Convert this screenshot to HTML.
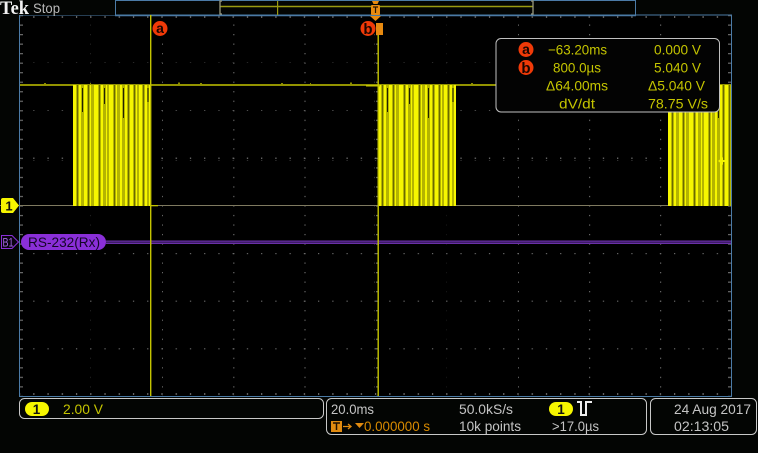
<!DOCTYPE html>
<html><head><meta charset="utf-8"><style>
html,body{margin:0;padding:0;background:#030503;width:758px;height:453px;overflow:hidden}
svg{display:block}
text{font-family:"Liberation Sans",sans-serif;font-size:14px}
.y{fill:#c4c400}.w{fill:#c4c4c4}.o{fill:#d88a00}
</style></head><body>
<svg width="758" height="453" viewBox="0 0 758 453" xmlns="http://www.w3.org/2000/svg">
<defs>
<pattern id="hd" width="14.24" height="4" patternUnits="userSpaceOnUse" x="19" y="0"><rect x="0" y="0" width="1.2" height="3" fill="#6a6a6a"/></pattern>
<pattern id="vd" width="4" height="9.52" patternUnits="userSpaceOnUse" x="0" y="15"><rect x="0" y="0" width="3" height="1.2" fill="#6a6a6a"/></pattern>
<g id="burst">
<rect x="0" y="0" width="78" height="121" fill="#b4b400"/>
<g fill="#f6f600">
<rect x="0" width="3" height="121"/><rect x="6" width="2" height="121"/><rect x="11" width="3" height="121"/><rect x="17" width="1" height="121"/><rect x="21" width="4" height="121"/><rect x="28" width="2" height="121"/><rect x="33" width="1" height="121"/><rect x="36" width="4" height="121"/><rect x="43" width="1" height="121"/><rect x="47" width="2" height="121"/><rect x="52" width="2" height="121"/><rect x="57" width="3" height="121"/><rect x="63" width="1" height="121"/><rect x="66" width="3" height="121"/><rect x="72" width="2" height="121"/><rect x="76" width="2" height="121"/>
</g>
<g fill="#6a6a00">
<rect x="4" width="1" height="121"/><rect x="15" width="1" height="121"/><rect x="26" width="1" height="121"/><rect x="41" width="1" height="121"/><rect x="55" width="1" height="121"/><rect x="61" width="1" height="121"/><rect x="70" width="1" height="121"/>
</g>
<g fill="#222200">
<rect x="9" y="3" width="1" height="24"/><rect x="31" y="3" width="1" height="16"/><rect x="50" y="3" width="1" height="30"/><rect x="74.500" y="3" width="1" height="14"/>
</g>
</g>
</defs>

<!-- graticule -->
<rect x="20" y="15" width="711" height="381" fill="#000"/>
<g>
<rect x="20" y="15" width="711" height="3" fill="url(#hd)"/>
<rect x="20" y="393" width="711" height="3" fill="url(#hd)"/>
<rect x="20" y="62.600" width="711" height="1.200" fill="url(#hd)"/>
<rect x="20" y="110.200" width="711" height="1.200" fill="url(#hd)"/>
<rect x="20" y="157.500" width="711" height="3" fill="url(#hd)"/>
<rect x="20" y="253" width="711" height="1.200" fill="url(#hd)"/>
<rect x="20" y="300.600" width="711" height="1.200" fill="url(#hd)"/>
<rect x="20" y="348.200" width="711" height="1.200" fill="url(#hd)"/>
<rect x="20" y="15" width="3" height="381" fill="url(#vd)"/>
<rect x="90.700" y="15" width="1.200" height="381" fill="url(#vd)"/>
<rect x="162" y="15" width="1.200" height="381" fill="url(#vd)"/>
<rect x="233.200" y="15" width="1.200" height="381" fill="url(#vd)"/>
<rect x="304.400" y="15" width="1.200" height="381" fill="url(#vd)"/>
<rect x="374.500" y="15" width="3" height="381" fill="url(#vd)"/>
<rect x="446.800" y="15" width="1.200" height="381" fill="url(#vd)"/>
<rect x="518" y="15" width="1.200" height="381" fill="url(#vd)"/>
<rect x="589" y="15" width="1.200" height="381" fill="url(#vd)"/>
<rect x="660" y="15" width="1.200" height="381" fill="url(#vd)"/>
<rect x="728" y="15" width="3" height="381" fill="url(#vd)"/>
</g>
<path d="M19.500 15V396.500H731.500V15H19.500" fill="none" stroke="#4b7ba6" stroke-width="1"/>

<!-- record view -->
<path d="M115.500 15V.5H635.500V15" fill="none" stroke="#4b7ba6"/>
<line x1="115" y1="15.500" x2="636" y2="15.500" stroke="#4b7ba6" stroke-width="1.500"/>
<line x1="220" y1="6.500" x2="533" y2="6.500" stroke="#9a9a10" stroke-width="1.500"/>
<rect x="277" y="1" width="1.200" height="14" fill="#9a9a10"/>
<path d="M222 1H220V14H222M531 1H533V14H531" fill="none" stroke="#9a9a80" stroke-width="1.300"/>

<!-- waveform -->
<line x1="20" y1="85" x2="731" y2="85" stroke="#c4c400" stroke-width="1.400"/>
<g fill="#8a8a00"><rect x="44" y="83" width="2" height="1"/><rect x="90" y="83" width="1" height="1"/><rect x="178" y="82.500" width="2" height="1.500"/><rect x="200" y="83" width="2" height="1"/><rect x="281" y="83" width="2" height="1"/><rect x="310" y="83" width="1" height="1"/><rect x="350" y="82.500" width="2" height="1.500"/><rect x="471" y="83" width="2" height="1"/></g>
<line x1="0" y1="205.500" x2="731" y2="205.500" stroke="#7f7a60" stroke-width="1"/>
<use href="#burst" x="73" y="85"/>
<use href="#burst" x="378" y="85"/>
<svg x="668" y="85" width="63" height="121" viewBox="0 0 63 121"><use href="#burst"/></svg>
<rect x="151" y="205" width="7" height="1.300" fill="#c4c400"/>
<rect x="366" y="85" width="14" height="1.500" fill="#c4c400"/>
<path d="M718 161L723 157V165Z" fill="#f4f400"/><rect x="723" y="160" width="2" height="2" fill="#f4f400"/>

<!-- cursors -->
<rect x="150" y="15" width="1.400" height="381" fill="#c4c400"/>
<rect x="377.500" y="28" width="1.400" height="368" fill="#c4c400"/>
<circle cx="160" cy="28.500" r="7.500" fill="#f03a08"/>
<text x="160" y="33" text-anchor="middle" style="font-size:14px" font-weight="bold" fill="#1a0500">a</text>
<circle cx="368" cy="28.500" r="7.500" fill="#f03a08"/>
<text x="368" y="34" text-anchor="middle" style="font-size:15px" font-weight="bold" fill="#1a0500">b</text>
<rect x="376" y="23" width="7" height="12" fill="#e88a10"/>
<!-- trigger marker -->
<path d="M372 1H379L377.500 4H373.500Z" fill="#e88a10"/>
<rect x="371" y="5" width="9" height="10" rx="1" fill="#e88a10"/>
<path d="M373 7H378M375.500 7V13" stroke="#2a1500" stroke-width="1.200" fill="none"/>
<path d="M370 16H381L375.500 21Z" fill="#e88a10"/>

<!-- readout -->
<rect x="496" y="38.500" width="223.500" height="73.500" rx="5" fill="#030303" stroke="#c0c0c0" stroke-width="1"/>
<circle cx="526" cy="49.500" r="7.500" fill="#f03a08"/>
<text x="526" y="54" text-anchor="middle" style="font-size:14px" font-weight="bold" fill="#1a0500">a</text>
<circle cx="526" cy="67.500" r="7.500" fill="#f03a08"/>
<text x="526" y="73" text-anchor="middle" style="font-size:15px" font-weight="bold" fill="#1a0500">b</text>
<text class="y" x="548" y="54.500" textLength="59" lengthAdjust="spacingAndGlyphs">−63.20ms</text>
<text class="y" x="553" y="72.500" textLength="48" lengthAdjust="spacingAndGlyphs">800.0µs</text>
<text class="y" x="546" y="90.500" textLength="62" lengthAdjust="spacingAndGlyphs">Δ64.00ms</text>
<text class="y" x="559" y="108.500" textLength="36" lengthAdjust="spacingAndGlyphs">dV/dt</text>
<text class="y" x="654" y="54.500" textLength="47" lengthAdjust="spacingAndGlyphs">0.000 V</text>
<text class="y" x="654" y="72.500" textLength="47" lengthAdjust="spacingAndGlyphs">5.040 V</text>
<text class="y" x="648" y="90.500" textLength="57" lengthAdjust="spacingAndGlyphs">Δ5.040 V</text>
<text class="y" x="648" y="108.500" textLength="60" lengthAdjust="spacingAndGlyphs">78.75 V/s</text>

<!-- Tek Stop -->
<rect x="0" y="0" width="115" height="15" fill="#030503"/>
<text x="0" y="14" textLength="29" lengthAdjust="spacingAndGlyphs" style="font-family:'Liberation Serif',serif;font-size:19px" font-weight="bold" fill="#f2f2f2">Tek</text>
<text x="33" y="13" textLength="27" lengthAdjust="spacingAndGlyphs" style="font-size:14px" fill="#b8b8b8">Stop</text>

<!-- channel markers -->
<path d="M1 200Q1 198 3 198H13L19 205.500L13 213H3Q1 213 1 211Z" fill="#f6f600"/>
<text x="9" y="210.500" text-anchor="middle" style="font-size:13px" font-weight="bold" fill="#111">1</text>
<path d="M1.500 235.500H12L18.500 242L12 248.500H1.500Z" fill="#0a0310" stroke="#8a2fd8" stroke-width="1"/>
<text x="2.500" y="246.500" textLength="11" lengthAdjust="spacingAndGlyphs" style="font-size:12px" fill="#a56ae6">B1</text>
<rect x="106" y="240.500" width="625" height="3.500" fill="#6a30a8"/>
<rect x="106" y="241.600" width="625" height="1.300" fill="#3a1a60"/>
<rect x="150" y="240" width="1.400" height="5" fill="#c4c400"/>
<rect x="377.500" y="240" width="1.400" height="5" fill="#c4c400"/>
<rect x="21" y="234" width="85" height="16" rx="8" fill="#8a2fd8"/>
<text x="28" y="247" textLength="72" lengthAdjust="spacingAndGlyphs" style="font-size:14px" fill="#150628">RS-232(Rx)</text>

<!-- bottom boxes -->
<rect x="19.500" y="398.500" width="304" height="20" rx="5" fill="#030503" stroke="#c8c8c8"/>
<rect x="25" y="402" width="24" height="14" rx="7" fill="#f6f600"/>
<text x="36.500" y="414" text-anchor="middle" style="font-size:13.500px" font-weight="bold" fill="#111">1</text>
<text class="y" x="63" y="414" textLength="40" lengthAdjust="spacingAndGlyphs">2.00 V</text>

<rect x="326.500" y="398.500" width="320" height="36" rx="5" fill="#030503" stroke="#c8c8c8"/>
<text class="w" x="331" y="414" textLength="43" lengthAdjust="spacingAndGlyphs">20.0ms</text>
<text class="w" x="459" y="414" textLength="54" lengthAdjust="spacingAndGlyphs">50.0kS/s</text>
<text class="w" x="459" y="431" textLength="62" lengthAdjust="spacingAndGlyphs">10k points</text>
<rect x="549" y="402" width="24" height="14" rx="7" fill="#f6f600"/>
<text x="561" y="414" text-anchor="middle" style="font-size:13.500px" font-weight="bold" fill="#111">1</text>
<path d="M577 402H581V415H586V402H592" fill="none" stroke="#eee" stroke-width="2"/>
<text class="w" x="552" y="431" textLength="47" lengthAdjust="spacingAndGlyphs">&gt;17.0µs</text>
<rect x="331" y="421" width="11" height="11" fill="#e08a10"/>
<path d="M333 423H340M336.500 423V430" stroke="#201000" stroke-width="1.500" fill="none"/>
<path d="M343 426.500H351M348 424L351 426.500L348 429" stroke="#e08a10" stroke-width="1.300" fill="none"/>
<path d="M355 423H364L359.500 428Z" fill="#e08a10"/>
<text class="o" x="364" y="431" textLength="66" lengthAdjust="spacingAndGlyphs">0.000000 s</text>

<rect x="650.500" y="398.500" width="106" height="36" rx="5" fill="#030503" stroke="#c8c8c8"/>
<text class="w" x="674" y="414" textLength="77" lengthAdjust="spacingAndGlyphs">24 Aug 2017</text>
<text class="w" x="674" y="431" textLength="55" lengthAdjust="spacingAndGlyphs">02:13:05</text>
</svg>
</body></html>
